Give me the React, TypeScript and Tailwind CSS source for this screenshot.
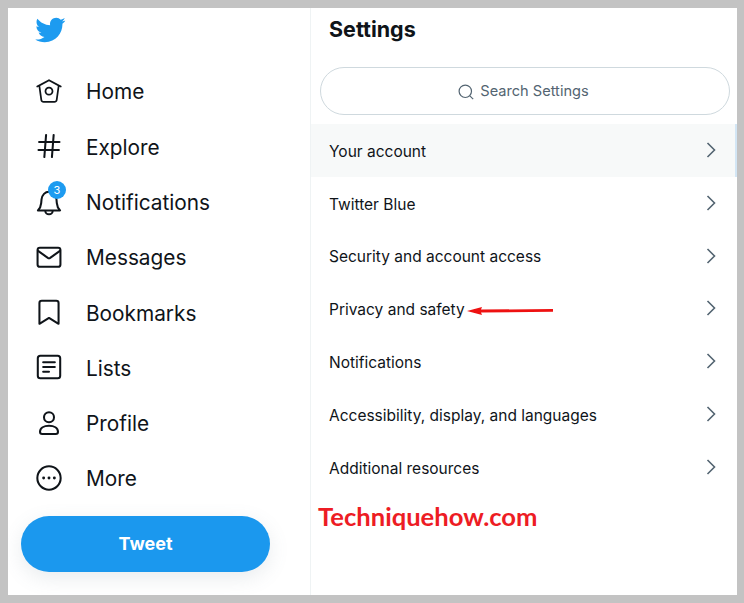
import type { ReactNode } from 'react';

const stroke = {
  fill: 'none',
  stroke: '#0f1419',
  strokeWidth: 1.75,
  strokeLinecap: 'round' as const,
  strokeLinejoin: 'round' as const,
};

const NavIcon = ({ children }: { children: ReactNode }) => (
  <svg viewBox="0 0 24 24" className="w-[28px] h-[28px] shrink-0">
    {children}
  </svg>
);

const navItems: { label: string; icon: ReactNode; badge?: string }[] = [
  {
    label: 'Home',
    icon: (
      <g fill="#0f1419">
        <path d="M22.46 7.57L12.357 2.115c-.223-.12-.49-.12-.713 0L1.543 7.57c-.364.197-.5.652-.303 1.017.135.25.394.393.66.393.12 0 .243-.03.356-.09l.815-.44L4.7 19.963c.214 1.215 1.308 2.062 2.658 2.062h9.282c1.352 0 2.445-.848 2.663-2.087l1.626-11.49.818.442c.364.193.82.06 1.017-.304.196-.363.06-.818-.304-1.016zm-4.638 12.133c-.107.606-.703.822-1.18.822H7.36c-.48 0-1.075-.216-1.178-.798L4.48 7.69 12 3.628l7.522 4.06-1.7 12.015z" />
        <path d="M8.22 12.184c0 2.084 1.695 3.78 3.78 3.78s3.78-1.696 3.78-3.78-1.695-3.78-3.78-3.78-3.78 1.696-3.78 3.78zm6.06 0c0 1.258-1.022 2.28-2.28 2.28s-2.28-1.022-2.28-2.28 1.022-2.28 2.28-2.28 2.28 1.022 2.28 2.28z" />
      </g>
    ),
  },
  {
    label: 'Explore',
    icon: <path {...stroke} d="M3.5 8.5h17.5M3 15.5h17.5M9.5 2.5l-1.5 19M16 2.5l-1.5 19" />,
  },
  {
    label: 'Notifications',
    badge: '3',
    icon: (
      <path
        {...stroke}
        d="M2.5 19.2c1.6-1.6 2.6-3.3 2.8-6.2l.3-3.2C6 5.9 8.7 3.2 12 3.2s6 2.7 6.4 6.6l.3 3.2c.2 2.9 1.2 4.6 2.8 6.2H2.5zM8.8 19.4c0 1.8 1.4 3.1 3.2 3.1s3.2-1.3 3.2-3.1"
      />
    ),
  },
  {
    label: 'Messages',
    icon: (
      <g {...stroke}>
        <rect x="2.2" y="4" width="19.6" height="16.4" rx="2" />
        <path d="M2.6 6.8l8.4 5.9c.6.4 1.4.4 2 0l8.4-5.9" />
      </g>
    ),
  },
  {
    label: 'Bookmarks',
    icon: <path {...stroke} d="M3.8 4.2C3.8 3 4.7 2.4 5.8 2.4h12.4c1.1 0 2 .6 2 1.8v17.9l-8.2-5-8.2 5V4.2z" />,
  },
  {
    label: 'Lists',
    icon: (
      <g {...stroke}>
        <rect x="2.4" y="2.4" width="19.2" height="19.2" rx="2.2" />
        <path d="M7 8h10M7 12h10M7 16h5" />
      </g>
    ),
  },
  {
    label: 'Profile',
    icon: (
      <g {...stroke}>
        <circle cx="12" cy="7" r="4.3" />
        <path d="M4.3 19.6c0-3.4 3.4-5.3 7.7-5.3s7.7 1.9 7.7 5.3c0 1.1-.7 1.9-1.9 1.9H6.2c-1.2 0-1.9-.8-1.9-1.9z" />
      </g>
    ),
  },
  {
    label: 'More',
    icon: (
      <g>
        <circle {...stroke} cx="12" cy="12" r="10" />
        <circle cx="7.4" cy="12" r="1.25" fill="#0f1419" />
        <circle cx="12" cy="12" r="1.25" fill="#0f1419" />
        <circle cx="16.6" cy="12" r="1.25" fill="#0f1419" />
      </g>
    ),
  },
];

const settingsItems = [
  'Your account',
  'Twitter Blue',
  'Security and account access',
  'Privacy and safety',
  'Notifications',
  'Accessibility, display, and languages',
  'Additional resources',
];

const Chevron = () => (
  <svg viewBox="0 0 10 16" className="w-[10px] h-[16px] -mt-[1px]" fill="none" stroke="#536471" strokeWidth="1.6">
    <path d="M1.5 1l7 7-7 7" />
  </svg>
);

const SettingsRow = ({ label, active }: { label: string; active: boolean }) => (
  <div
    className={`flex items-center justify-between h-[52.85px] pl-[18px] ${
      active ? 'pr-[19px] bg-[#f7f9f9] border-r-2 border-[#d3e6f5]' : 'pr-[21px]'
    }`}
  >
    <div className="flex items-center mt-[2px]">
      <span className="text-[15.5px] text-[#0f1419]">{label}</span>
      {label === 'Privacy and safety' && (
        <svg viewBox="0 0 90 10" className="w-[90px] h-[10px] mt-[3px]">
          <path d="M2 5l15-4-1 2.6 72-.6v2.8l-72 .6 1 2.6z" fill="#ee1111" />
        </svg>
      )}
    </div>
    <Chevron />
  </div>
);

export default function App() {
  return (
    <div className="w-[744px] h-[603px] bg-[#c3c3c3] pt-2 pb-2 pl-2 pr-[7px] font-['Inter',sans-serif]">
      <div className="flex h-full bg-white overflow-hidden">
        <aside className="w-[302px] shrink-0">
          <div className="h-[55.3px] pl-[26px] pt-[6px]">
            <svg viewBox="0 0 24 24" preserveAspectRatio="none" className="w-[32px] h-[32px]" fill="#1d9bf0">
              <path d="M23.643 4.937c-.835.37-1.732.62-2.675.733.962-.576 1.7-1.49 2.048-2.578-.9.534-1.897.922-2.958 1.13-.85-.904-2.06-1.47-3.4-1.47-2.572 0-4.658 2.086-4.658 4.66 0 .364.042.718.12 1.06-3.873-.195-7.304-2.05-9.602-4.868-.4.69-.63 1.49-.63 2.342 0 1.616.823 3.043 2.072 3.878-.764-.025-1.482-.234-2.11-.583v.06c0 2.257 1.605 4.14 3.737 4.568-.392.106-.803.162-1.227.162-.3 0-.593-.028-.877-.082.593 1.85 2.313 3.198 4.352 3.234-1.595 1.25-3.604 1.995-5.786 1.995-.376 0-.747-.022-1.112-.067 2.062 1.323 4.51 2.093 7.14 2.093 8.57 0 13.255-7.098 13.255-13.254 0-.2-.005-.402-.014-.602.91-.658 1.7-1.477 2.323-2.41z" />
            </svg>
          </div>
          <nav>
            {navItems.map((item) => (
              <div key={item.label} className="flex items-center h-[55.3px] pl-[27px] gap-[23px]">
                <div className="relative flex">
                  <NavIcon>{item.icon}</NavIcon>
                  {item.badge && (
                    <span className="absolute -top-[7px] left-[13px] w-[18px] h-[18px] rounded-full bg-[#1d9bf0] text-white text-[11px] leading-[18px] text-center">
                      {item.badge}
                    </span>
                  )}
                </div>
                <span className="mt-[2px] text-[20.8px] text-[#0f1419]">{item.label}</span>
              </div>
            ))}
          </nav>
          <button className="block mt-[10px] ml-[13px] w-[249px] h-[56px] rounded-full bg-[#1b98ee] text-white text-[18px] font-bold shadow-[0_6px_20px_rgba(101,119,134,0.14)]">
            Tweet
          </button>
        </aside>
        <main className="flex-1 border-l border-[#eff3f4]">
          <h1 className="h-[44px] pl-[18px] text-[21.5px] font-bold leading-[43px] text-[#0f1419]">Settings</h1>
          <div className="flex items-center justify-center gap-[6px] mt-[15px] ml-[9px] mr-[7px] pr-[3px] pt-[1px] h-[48px] rounded-full border border-[#cfd9de] text-[#536471] text-[14.6px]">
            <svg viewBox="0 0 16 16" className="w-[16px] h-[16px]" fill="none" stroke="#536471" strokeWidth="1.2">
              <circle cx="7.3" cy="7.3" r="6.2" />
              <path d="M11.8 11.8l3.4 3.4" />
            </svg>
            Search Settings
          </div>
          <div className="mt-[9px]">
            {settingsItems.map((label, i) => (
              <SettingsRow key={label} label={label} active={i === 0} />
            ))}
          </div>
          <div className="ml-[7px] mt-[5px] text-[25.6px] font-bold leading-[34px] text-[#ed1c24] font-['Lato',sans-serif]">
            Techniquehow.com
          </div>
        </main>
      </div>
    </div>
  );
}
